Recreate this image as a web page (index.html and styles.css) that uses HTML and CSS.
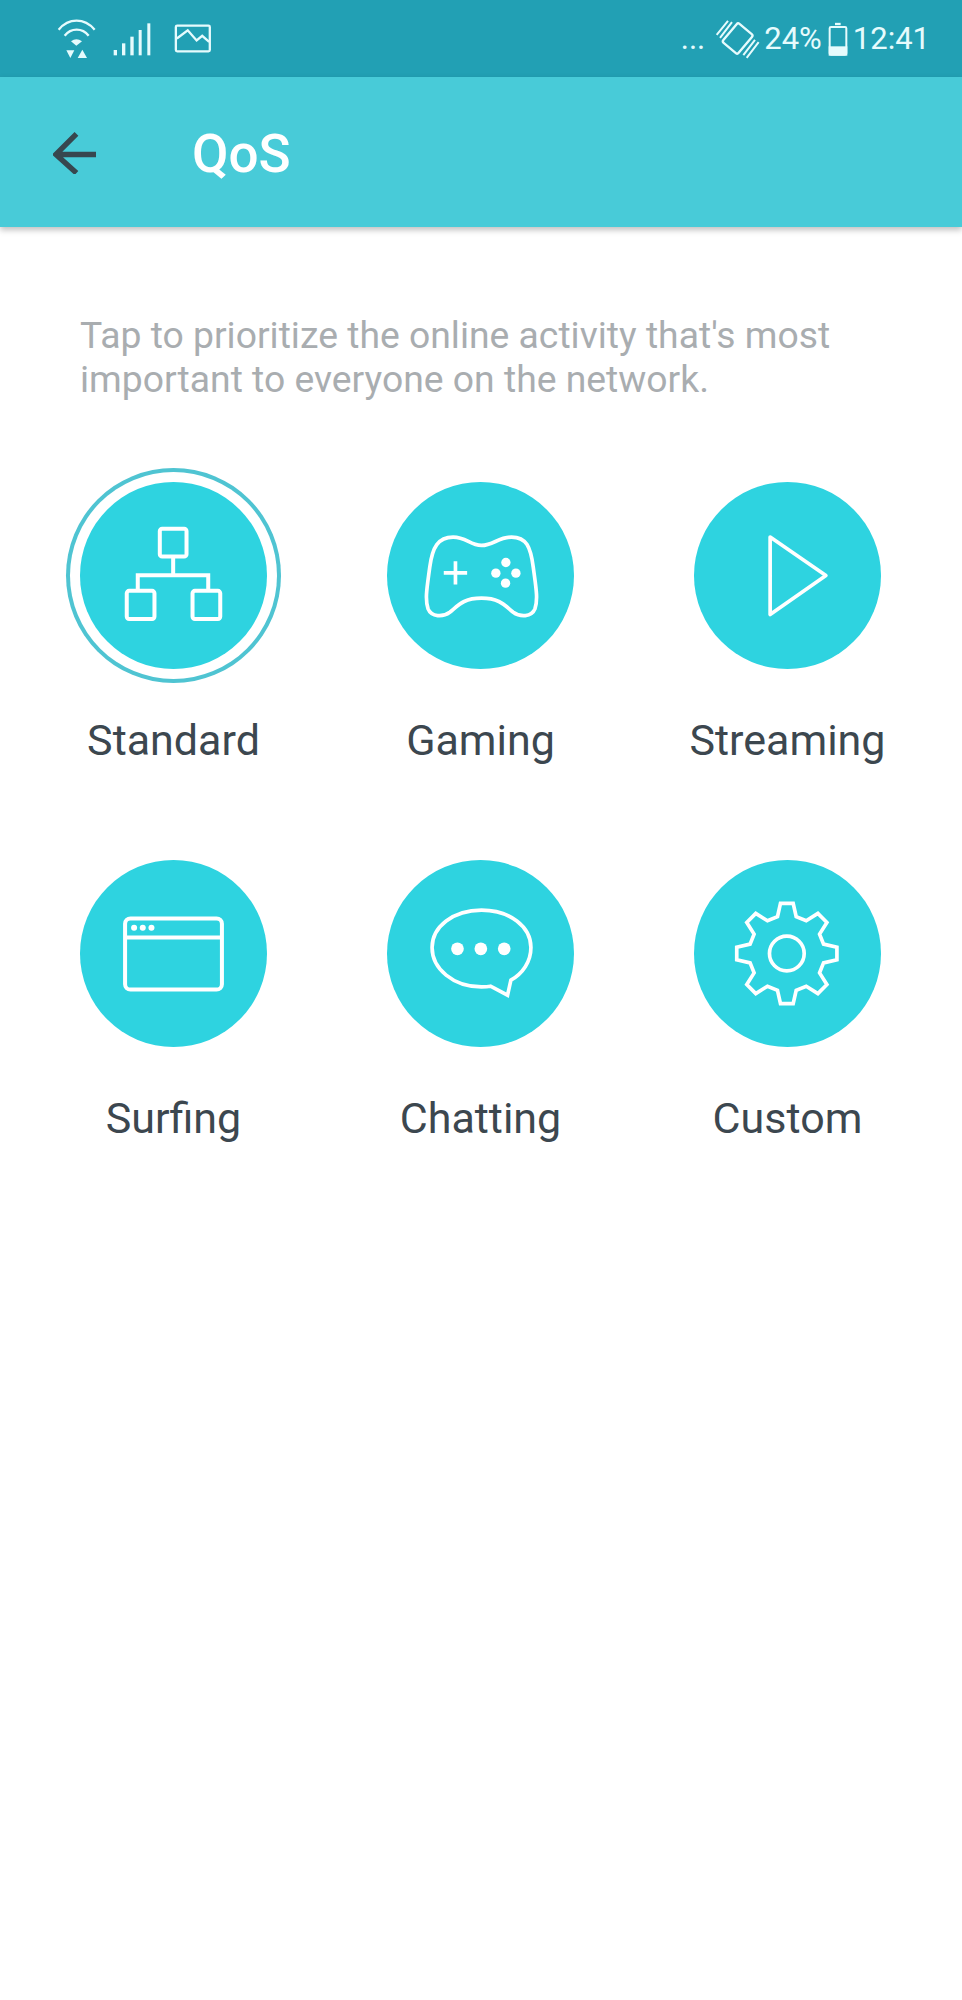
FILE: index.html
```html
<!DOCTYPE html>
<html lang="en">
<head>
  <meta charset="UTF-8">
  <title>QoS</title>
  <link rel="stylesheet" href="styles.css">
</head>
<body>

  <div class="status-bar">
    <div class="status-left">
      <svg class="ic-wifi" viewBox="170 58 120 120" fill="none" stroke="#e6fbfd" stroke-width="7">
        <path d="M175 90C205 54 252 54 283 90"/>
        <path d="M193 108C212 84 246 84 265 108"/>
        <path d="M212 125Q228 112 245 125L228 138Z" fill="#e6fbfd" stroke="none"/>
        <path d="M198 152H222L210 175Z" fill="#e6fbfd" stroke="none"/>
        <path d="M232 175H260L246 150Z" fill="#e6fbfd" stroke="none"/>
      </svg>
      <svg class="ic-signal" viewBox="340 62 114 102" fill="#e6fbfd">
        <rect x="342" y="146" width="10" height="16"/>
        <rect x="367" y="126" width="10" height="36"/>
        <rect x="392" y="106" width="10" height="56"/>
        <rect x="417" y="86" width="9" height="76"/>
        <rect x="443" y="66" width="9" height="96"/>
      </svg>
      <svg class="ic-image" viewBox="522 72 114 88" fill="none" stroke="#e6fbfd" stroke-width="7">
        <rect x="527" y="77" width="103" height="78" rx="4"/>
        <path d="M530 116L563 91L590 122L607 108L628 126"/>
      </svg>
    </div>
    <div class="status-right">
      <span class="more">...</span>
      <svg class="ic-rotate" viewBox="165 50 135 125" fill="none" stroke="#e6fbfd" stroke-width="7">
        <rect x="203" y="74" width="60" height="74" rx="6" transform="rotate(40 233 111)"/>
        <path d="M170 100L204 58M180 109L216 62M250 161L285 115M260 169L296 122" stroke-width="6"/>
      </svg>
      <span class="pct">24%</span>
      <svg class="ic-battery" viewBox="510 62 60 102" fill="none" stroke="#e6fbfd" stroke-width="6">
        <path d="M531 68H548" stroke-width="7"/>
        <rect x="515" y="77" width="50" height="83" rx="4"/>
        <rect x="515" y="138" width="50" height="22" fill="#e6fbfd"/>
      </svg>
      <span class="time">12:41</span>
    </div>
  </div>

  <header class="app-bar">
    <svg class="back" viewBox="0 0 46 44" fill="none" stroke="#37474f" stroke-width="5.5">
      <path d="M44 24H4M24 3L3 24L24 43"/>
    </svg>
    <h1>QoS</h1>
  </header>

  <p class="intro">Tap to prioritize the online activity that's most important to everyone on the network.</p>

  <div class="modes">
    <div class="mode">
      <div class="circle selected">
        <svg viewBox="92 97 560 560" fill="none" stroke="#fff" stroke-width="12">
          <rect x="331" y="237" width="80" height="83" rx="7"/>
          <path d="M371 320V376M265 420V376H476V420"/>
          <rect x="232" y="423" width="83" height="84" rx="7"/>
          <rect x="429" y="423" width="83" height="84" rx="7"/>
        </svg>
      </div>
      <span class="label">Standard</span>
    </div>
    <div class="mode">
      <div class="circle">
        <svg viewBox="52 35 560 560" fill="none" stroke="#fff" stroke-width="11">
          <path d="M250 200C290 200 300 225 335 225C370 225 385 200 425 200C470 200 482 230 490 290C498 350 505 385 495 415C485 440 450 440 430 425C405 405 390 383 335 383C280 383 265 405 240 425C220 440 185 440 175 415C165 385 172 350 180 290C188 230 205 200 250 200Z"/>
          <path d="M222 307H292M257 272V342"/>
          <g fill="#fff" stroke="none">
            <circle cx="408" cy="276" r="14"/>
            <circle cx="378" cy="308" r="14"/>
            <circle cx="438" cy="308" r="14"/>
            <circle cx="407" cy="338" r="14"/>
          </g>
        </svg>
      </div>
      <span class="label">Gaming</span>
    </div>
    <div class="mode">
      <div class="circle">
        <svg viewBox="45 35 560 560" fill="none" stroke="#fff" stroke-width="11" stroke-linejoin="round">
          <path d="M273 200L440 315L273 432Z"/>
        </svg>
      </div>
      <span class="label">Streaming</span>
    </div>
    <div class="mode">
      <div class="circle">
        <svg viewBox="30 30 560 560" fill="none" stroke="#fff" stroke-width="12">
          <rect x="165" y="205" width="290" height="213" rx="16"/>
          <path d="M165 262H455"/>
          <g fill="#fff" stroke="none">
            <circle cx="192" cy="233" r="9"/>
            <circle cx="218" cy="233" r="9"/>
            <circle cx="244" cy="233" r="9"/>
          </g>
        </svg>
      </div>
      <span class="label">Surfing</span>
    </div>
    <div class="mode">
      <div class="circle">
        <svg viewBox="52 30 560 560" fill="none" stroke="#fff" stroke-width="11">
          <path d="M335 180C420 180 483 230 483 292C483 335 458 370 423 390L413 435L362 408C352 410 345 410 335 410C250 410 187 355 187 292C187 230 250 180 335 180Z"/>
          <g fill="#fff" stroke="none">
            <circle cx="263" cy="296" r="19"/>
            <circle cx="333" cy="296" r="19"/>
            <circle cx="403" cy="296" r="19"/>
          </g>
        </svg>
      </div>
      <span class="label">Chatting</span>
    </div>
    <div class="mode">
      <div class="circle">
        <svg viewBox="45 30 560 560" fill="none" stroke="#fff" stroke-width="11">
          <path d="M295 200L304 160H342L351 200L381 212L416 190L443 217L421 252L433 282L473 291V329L433 338L421 368L443 403L416 430L381 408L351 420L342 460H304L295 420L265 408L230 430L203 403L225 368L213 338L173 329V291L213 282L225 252L203 217L230 190L265 212Z"/>
          <circle cx="323" cy="310" r="52"/>
        </svg>
      </div>
      <span class="label">Custom</span>
    </div>
  </div>

</body>
</html>
```

FILE: styles.css
```css
body {
  margin: 0;
  min-height: 2000px;
  background-color: #fff;
  font-family: Roboto, "Liberation Sans", sans-serif;
}
svg {
  display: block;
}

.status-bar {
  height: 77px;
  display: flex;
  justify-content: space-between;
  align-items: center;
  padding: 0 32px 0 57px;
  background-color: #22a0b4;
  color: #e6fbfd;
  font-size: 31px;
}
.status-left, .status-right {
  display: flex;
  align-items: center;
}
.ic-wifi {
  width: 40px;
  height: 40px;
}
.ic-signal {
  width: 38px;
  height: 34px;
  margin-left: 16px;
}
.ic-image {
  width: 38px;
  height: 29px;
  margin-left: 23px;
}
.more {
  margin-right: 10px;
}
.ic-rotate {
  width: 45px;
  height: 42px;
  margin-right: 4px;
}
.ic-battery {
  width: 20px;
  height: 34px;
  margin: 0 5px 0 6px;
}

.app-bar {
  height: 150px;
  display: flex;
  align-items: center;
  padding-left: 53px;
  background-color: #48cbd8;
  box-shadow: 0 3px 6px rgba(0,0,0,0.25);
}
.back {
  width: 45px;
  height: 43px;
}
.app-bar h1 {
  margin: 3px 0 0 94px;
  font-size: 53px;
  font-weight: 500;
  color: #fff;
}

.intro {
  margin: 86px 60px 81px 80px;
  font-size: 37.3px;
  line-height: 44px;
  color: #a9adb0;
}

.modes {
  display: grid;
  grid-template-columns: repeat(3, 307px);
  row-gap: 96px;
  padding-left: 20px;
}
.mode {
  display: flex;
  flex-direction: column;
  align-items: center;
}
.circle {
  width: 187px;
  height: 187px;
  border-radius: 50%;
  background-color: #2ed3e0;
}
.circle svg {
  width: 187px;
  height: 187px;
}
.selected {
  box-shadow: 0 0 0 10px #fff, 0 0 0 14px #4fc4d2;
}
.label {
  margin-top: 47px;
  font-size: 43px;
  line-height: 48px;
  color: #3c474f;
}
```
